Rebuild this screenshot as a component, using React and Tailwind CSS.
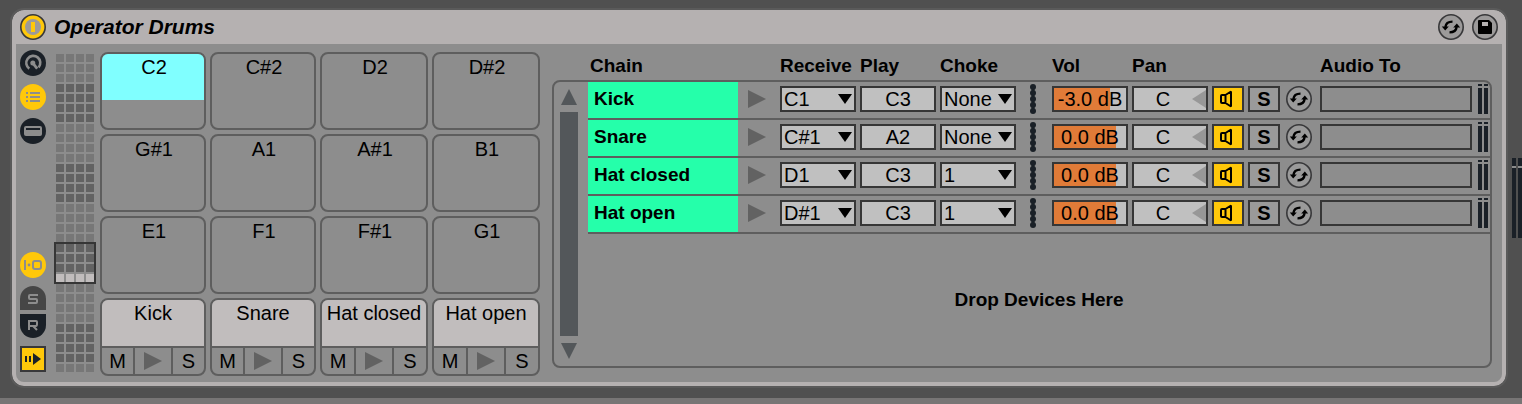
import React, { useState } from "react";

const chains = [
  { name: "Kick", receive: "C1", play: "C3", choke: "None", vol: "-3.0 dB", fill: 78 },
  { name: "Snare", receive: "C#1", play: "A2", choke: "None", vol: "0.0 dB", fill: 86 },
  { name: "Hat closed", receive: "D1", play: "C3", choke: "1", vol: "0.0 dB", fill: 86 },
  { name: "Hat open", receive: "D#1", play: "C3", choke: "1", vol: "0.0 dB", fill: 86 },
];

const emptyPads = ["C2", "C#2", "D2", "D#2", "G#1", "A1", "A#1", "B1", "E1", "F1", "F#1", "G1"];
const loadedPads = ["Kick", "Snare", "Hat closed", "Hat open"];

const receiveNotes = ["C1", "C#1", "D1", "D#1"];
const chokeGroups = ["None", "1", "2", "3", "4"];

// One letter per row: l = light octave, d = dark octave, b = pads in use.
const overviewRows = "lllddddllllddddlllldddbllllddddl".split("");

function cellTone(row) {
  if (row === "b") return "bg-[#c1bdbd]";
  if (row === "l") return "bg-[#777777]";
  return "bg-[#626262]";
}

function PowerIcon() {
  return (
    <svg width="26" height="26" viewBox="0 0 26 26" aria-hidden="true">
      <circle cx="13" cy="13" r="12.2" fill="#ffc80a" stroke="#38383a" strokeWidth="1.6" />
      <circle cx="13" cy="13" r="8" fill="#9c9a9a" />
      <rect x="11" y="8" width="4" height="10" fill="#ffc80a" />
    </svg>
  );
}

function KnobIcon() {
  return (
    <svg width="26" height="26" viewBox="0 0 26 26" aria-hidden="true">
      <circle cx="13" cy="13" r="13" fill="#1a2027" />
      <path d="M9.300 18.600A7 7 0 1 1 18.600 17.400" fill="none" stroke="#8d8d8d" strokeWidth="2.600" />
      <circle cx="12.800" cy="13" r="2.500" fill="#8d8d8d" />
      <path d="M11.800 11.800L17.200 18.600" fill="none" stroke="#8d8d8d" strokeWidth="2.800" />
    </svg>
  );
}

function ListIcon() {
  return (
    <svg width="26" height="26" viewBox="0 0 26 26" aria-hidden="true">
      <circle cx="13" cy="13" r="13" fill="#ffc80a" />
      <path d="M6 9h2M10 9h10M6 13h2M10 13h10M6 17h2M10 17h10" stroke="#8d8d8d" strokeWidth="2" />
    </svg>
  );
}

function DeviceIcon() {
  return (
    <svg width="26" height="26" viewBox="0 0 26 26" aria-hidden="true">
      <circle cx="13" cy="13" r="13" fill="#1a2027" />
      <rect x="4" y="8" width="18" height="10" rx="2" fill="#8d8d8d" />
      <path d="M6 11h14" stroke="#1a2027" strokeWidth="2" />
    </svg>
  );
}

function InOutIcon() {
  return (
    <svg width="26" height="26" viewBox="0 0 26 26" aria-hidden="true">
      <circle cx="13" cy="13" r="13" fill="#ffc80a" />
      <path d="M5 8v10" stroke="#8d8d8d" strokeWidth="2" />
      <circle cx="9" cy="13" r="1.4" fill="#8d8d8d" />
      <rect x="13" y="9" width="8" height="8" rx="2" fill="none" stroke="#8d8d8d" strokeWidth="2" />
    </svg>
  );
}

function AutoSelectIcon() {
  return (
    <svg width="26" height="26" viewBox="0 0 26 26" aria-hidden="true">
      <rect x="1" y="1" width="24" height="24" fill="#ffc80a" stroke="#38383a" strokeWidth="2" />
      <path d="M6 10v6M10 10v6" stroke="#1a2027" strokeWidth="2" />
      <path d="M13 7l8 6-8 6z" fill="#1a2027" />
    </svg>
  );
}

function SwapIcon({ fill }) {
  return (
    <svg width="26" height="26" viewBox="0 0 26 26" aria-hidden="true">
      <circle cx="13" cy="13" r="12.2" fill={fill} stroke="#38383a" strokeWidth="1.6" />
      <path d="M14.500 7.600C10.500 7.600 7.800 9.500 7.400 13M11.500 18.400C15.500 18.400 18.200 16.500 18.600 13" fill="none" stroke="#000" strokeWidth="2.400" />
      <path d="M3.800 12.400h7L7.200 16.400zM22.200 13.600h-7L18.800 9.600z" fill="#000" />
    </svg>
  );
}

function SaveIcon() {
  return (
    <svg width="26" height="26" viewBox="0 0 26 26" aria-hidden="true">
      <circle cx="13" cy="13" r="12.2" fill="#9c9a9a" stroke="#38383a" strokeWidth="1.6" />
      <path d="M7 6h10l3 3v10q0 1-1 1H7q-1 0-1-1V7q0-1 1-1z" fill="#000" />
      <rect x="10" y="8" width="6" height="4" fill="#b5b1b1" />
    </svg>
  );
}

function PlayTriangle() {
  return (
    <svg width="18" height="18" viewBox="0 0 18 18" aria-hidden="true">
      <path d="M0 0L18 9L0 18z" fill="#626262" />
    </svg>
  );
}

function SpeakerIcon() {
  return (
    <svg width="28" height="22" viewBox="0 0 28 22" aria-hidden="true">
      <path d="M11.500 7H8Q7 7 7 8v6q0 1 1 1h3.500zM11.500 7L17 3.500v15L11.500 15" fill="none" stroke="#000" strokeWidth="2" strokeLinejoin="bevel" />
    </svg>
  );
}

function DotStrip() {
  return (
    <svg width="6" height="30" viewBox="0 0 6 30" aria-hidden="true">
      <path d="M3 2v26" stroke="#1a2027" strokeWidth="3" />
      {[3, 9, 15, 21, 27].map((y) => (
        <circle key={y} cx="3" cy={y} r="3" fill="#1a2027" />
      ))}
    </svg>
  );
}

function Meter() {
  return (
    <div className="flex h-[30px] gap-0.5">
      {[0, 1].map((channel) => (
        <div key={channel} className="flex w-1 flex-col gap-0.5">
          <div className="h-0.5 bg-[#1a2027]" />
          <div className="grow bg-[#1a2027]" />
        </div>
      ))}
    </div>
  );
}

function NoteSelect({ label, value, options }) {
  return (
    <div className="relative mr-1 h-[26px] w-[76px] shrink-0">
      <select
        aria-label={label}
        defaultValue={value}
        className="block h-full w-full appearance-none border-2 border-[#363636] bg-[#c0c0c0] pl-0.5 text-xl leading-[22px] outline-none"
      >
        {options.map((option) => (
          <option key={option}>{option}</option>
        ))}
      </select>
      <svg className="pointer-events-none absolute top-2 right-1" width="14" height="10" viewBox="0 0 14 10" aria-hidden="true">
        <path d="M0 0h14L7 10z" fill="#000" />
      </svg>
    </div>
  );
}

function ChainRow({ chain }) {
  return (
    <li className="flex h-[38px] items-start border-b-2 border-[#5e5e5e]">
      <button className="h-9 w-[150px] shrink-0 bg-[#25ffaa] pb-0.5 pl-1.5 text-left text-[19px] font-bold">{chain.name}</button>
      <button aria-label={`Preview ${chain.name}`} className="mt-2 ml-2.5 w-8 shrink-0">
        <PlayTriangle />
      </button>
      <div className="mt-1 flex min-w-0 grow items-start">
        <NoteSelect label={`${chain.name} receive`} value={chain.receive} options={receiveNotes} />
        <input
          aria-label={`${chain.name} play note`}
          defaultValue={chain.play}
          className="mr-1 h-[26px] w-[76px] shrink-0 border-2 border-[#363636] bg-[#c0c0c0] text-center text-xl leading-[22px] outline-none"
        />
        <NoteSelect label={`${chain.name} choke group`} value={chain.choke} options={chokeGroups} />
        <div className="-mt-0.5 mr-4 ml-2.5 w-1.5 shrink-0">
          <DotStrip />
        </div>
        <input
          aria-label={`${chain.name} volume`}
          defaultValue={chain.vol}
          className="mr-1 h-[26px] w-[76px] shrink-0 border-2 border-[#363636] text-center text-xl leading-[22px] outline-none"
          style={{ background: `linear-gradient(to right, #e07b38 ${chain.fill}%, #c0c0c0 ${chain.fill}%)` }}
        />
        <div className="relative mr-1 h-[26px] w-[76px] shrink-0">
          <input
            aria-label={`${chain.name} pan`}
            defaultValue="C"
            className="block h-full w-full border-2 border-[#363636] bg-[#c0c0c0] pr-3.5 text-center text-xl leading-[22px] outline-none"
          />
          <svg className="pointer-events-none absolute top-1 right-0.5" width="14" height="18" viewBox="0 0 14 18" aria-hidden="true">
            <path d="M14 0v18L0 9z" fill="#979797" />
          </svg>
        </div>
        <button aria-label={`${chain.name} active`} className="mr-1 h-[26px] w-8 shrink-0 border-2 border-[#363636] bg-[#ffc80a]">
          <SpeakerIcon />
        </button>
        <button aria-label={`Solo ${chain.name}`} className="mr-1.5 h-[26px] w-8 shrink-0 border-2 border-[#363636] bg-[#9a9a9a] text-xl leading-[22px] font-bold">
          S
        </button>
        <button aria-label={`Hot-swap ${chain.name}`} className="mr-2 size-[26px] shrink-0">
          <SwapIcon fill="#9a9a9a" />
        </button>
        <button aria-label={`${chain.name} audio to`} className="mr-1.5 h-[26px] min-w-10 grow border-2 border-[#363636]" />
        <div className="-mt-0.5 mr-0.5 shrink-0">
          <Meter />
        </div>
      </div>
    </li>
  );
}

function Rail() {
  return (
    <nav aria-label="Rack views" className="ml-1 flex w-[26px] shrink-0 flex-col pt-1.5 pb-2.5">
      <div className="flex flex-col gap-2">
        <button aria-label="Show macro controls" className="size-[26px]"><KnobIcon /></button>
        <button aria-label="Show chain list" className="size-[26px]"><ListIcon /></button>
        <button aria-label="Show devices" className="size-[26px]"><DeviceIcon /></button>
      </div>
      <button aria-label="Show input and output" className="mt-auto size-[26px]"><InOutIcon /></button>
      <button aria-label="Show sends" className="mt-2 h-6 rounded-t-[13px] bg-[#464646]">
        <svg width="26" height="24" viewBox="0 0 26 24" aria-hidden="true">
          <path d="M18 9H10Q9 9 9 10v2q0 1 1 1h6q1 0 1 1v2q0 1-1 1H8" fill="none" stroke="#8d8d8d" strokeWidth="2" />
        </svg>
      </button>
      <button aria-label="Show returns" className="mt-1 h-6 rounded-b-[13px] bg-[#1a2027]">
        <svg width="26" height="24" viewBox="0 0 26 24" aria-hidden="true">
          <path d="M9 16V7h7q1 0 1 1v2q0 2-1 2H9M13 12l4 4" fill="none" stroke="#8d8d8d" strokeWidth="2" />
        </svg>
      </button>
      <button aria-label="Auto select" className="mt-2 size-[26px]"><AutoSelectIcon /></button>
    </nav>
  );
}

function PadOverview() {
  return (
    <div className="relative mt-2.5 ml-2.5 shrink-0 self-start">
      <div className="grid grid-cols-[repeat(4,8px)] gap-0.5">
        {overviewRows.map((row, r) =>
          [0, 1, 2, 3].map((c) => <div key={`${r}-${c}`} className={`h-2 ${cellTone(row)}`} />)
        )}
      </div>
      <div className="absolute top-[188px] -left-0.5 size-[42px] border-2 border-[#363636]" />
    </div>
  );
}

function Pads() {
  const [selected, setSelected] = useState("C2");
  return (
    <div className="mt-2 ml-1.5 grid shrink-0 grid-cols-[106px_106px_108px_108px] auto-rows-[78px] gap-1 self-start text-xl leading-[26px]">
      {emptyPads.map((note) => (
        <button
          key={note}
          onClick={() => setSelected(note)}
          className="flex flex-col overflow-hidden rounded-lg border-2 border-[#5e5e5e]"
        >
          <span className={`h-[46px] w-full pl-0.5 ${selected === note ? "bg-[#80ffff]" : ""}`}>{note}</span>
        </button>
      ))}
      {loadedPads.map((name) => (
        <div key={name} className="flex flex-col overflow-hidden rounded-lg border-2 border-[#5e5e5e]">
          <button className="flex h-[46px] justify-center bg-[#c1bdbd] whitespace-nowrap">{name}</button>
          <div className="grid h-7 grid-cols-[1fr_40px_1fr] border-t-2 border-[#5e5e5e]">
            <button aria-label={`Mute ${name}`}>M</button>
            <button aria-label={`Preview ${name}`} className="flex items-center justify-center border-x-2 border-[#5e5e5e]">
              <PlayTriangle />
            </button>
            <button aria-label={`Solo ${name}`}>S</button>
          </div>
        </div>
      ))}
    </div>
  );
}

function ChainList() {
  return (
    <section aria-label="Chains" className="mr-2.5 mb-3.5 ml-3 flex min-w-0 grow flex-col">
      <div className="flex h-9 shrink-0 items-center pt-2 pl-[38px] text-[19px] leading-6 font-bold">
        <span className="w-[190px] shrink-0">Chain</span>
        <span className="w-20 shrink-0">Receive</span>
        <span className="w-20 shrink-0">Play</span>
        <span className="w-28 shrink-0">Choke</span>
        <span className="w-20 shrink-0">Vol</span>
        <span className="w-[188px] shrink-0">Pan</span>
        <span className="whitespace-nowrap">Audio To</span>
      </div>
      <div className="flex grow rounded-lg border-2 border-[#5e5e5e]">
        <div className="flex w-[34px] shrink-0 flex-col items-center pt-[7px] pr-1 pb-[7px]">
          <button aria-label="Scroll up">
            <svg className="block" width="16" height="16" viewBox="0 0 16 16" aria-hidden="true">
              <path d="M8 0l8 16H0z" fill="#53575a" />
            </svg>
          </button>
          <div className="my-[7px] w-[18px] grow bg-[#53575a]" />
          <button aria-label="Scroll down">
            <svg className="block" width="16" height="16" viewBox="0 0 16 16" aria-hidden="true">
              <path d="M0 0h16L8 16z" fill="#53575a" />
            </svg>
          </button>
        </div>
        <div className="flex min-w-0 grow flex-col">
          <ul>
            {chains.map((chain) => (
              <ChainRow key={chain.name} chain={chain} />
            ))}
          </ul>
          <p className="flex grow items-center justify-center text-[19px] font-bold">Drop Devices Here</p>
        </div>
      </div>
    </section>
  );
}

export default function App() {
  return (
    <div className="flex min-h-screen flex-col bg-[#777575] pb-1.5 font-['Liberation_Sans',Arial,sans-serif] text-black">
      <div className="flex grow items-start bg-[#505050] pt-2.5 pb-3">
        <main className="ml-3 flex min-w-0 grow flex-col self-stretch rounded-xl border-4 border-t-0 border-[#b5b1b1] bg-[#8d8d8d] outline-2 outline-[#5a5a5a]">
          <header className="flex h-[34px] shrink-0 items-center rounded-t-lg bg-[#b5b1b1] pr-1 pl-1">
            <button aria-label="Device on"><PowerIcon /></button>
            <h1 className="ml-2 grow text-[21px] leading-6 font-bold italic">Operator Drums</h1>
            <div className="flex gap-2">
              <button aria-label="Hot-swap rack"><SwapIcon fill="#9c9a9a" /></button>
              <button aria-label="Save preset"><SaveIcon /></button>
            </div>
          </header>
          <div className="flex grow">
            <Rail />
            <PadOverview />
            <Pads />
            <ChainList />
          </div>
        </main>
        <div className="mt-[148px] ml-1.5 flex h-20 w-2.5 shrink-0 gap-0.5">
          {[0, 1].map((channel) => (
            <div key={channel} className="flex w-1 flex-col">
              <div className="h-2 bg-[#1a2027]" />
              <div className="h-0.5 bg-[#8d8d8d]" />
              <div className="grow bg-[#1a2027]" />
            </div>
          ))}
        </div>
      </div>
    </div>
  );
}
